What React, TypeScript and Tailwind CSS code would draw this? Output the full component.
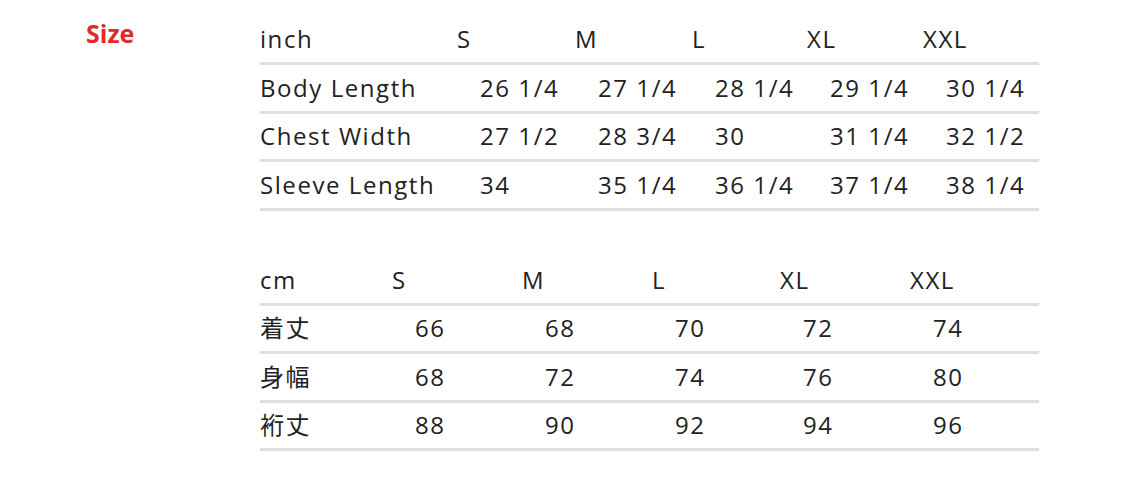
const inchHeads = ["S", "M", "L", "XL", "XXL"];
const inchRows = [
  ["Body Length", "26 1/4", "27 1/4", "28 1/4", "29 1/4", "30 1/4"],
  ["Chest Width", "27 1/2", "28 3/4", "30", "31 1/4", "32 1/2"],
  ["Sleeve Length", "34", "35 1/4", "36 1/4", "37 1/4", "38 1/4"],
];

const cmHeads = ["S", "M", "L", "XL", "XXL"];
const cmRows = [
  ["着丈", "66", "68", "70", "72", "74"],
  ["身幅", "68", "72", "74", "76", "80"],
  ["裄丈", "88", "90", "92", "94", "96"],
];

function SizeTable({
  unit,
  heads,
  rows,
  cols,
}: {
  unit: string;
  heads: string[];
  rows: string[][];
  cols: string;
}) {
  return (
    <div className="w-[779px]">
      <div className={`grid ${cols} h-[48px] items-end border-b-[3px] border-[#dfdfdf] pb-[7px]`}>
        <span>{unit}</span>
        {heads.map((h) => (
          <span key={h}>{h}</span>
        ))}
      </div>
      {rows.map((r) => (
        <div
          key={r[0]}
          className={`grid ${cols} h-[48.5px] items-end border-b-[3px] border-[#dfdfdf] pb-[7px]`}
        >
          {r.map((c, i) => (
            <span key={i} className={i === 0 ? "" : "pl-[23px]"}>
              {c}
            </span>
          ))}
        </div>
      ))}
    </div>
  );
}

export default function App() {
  return (
    <div
      className="w-[1125px] h-[490px] bg-white flex text-[#222] text-[24px] leading-[32px] tracking-[0.065em]"
      style={{ fontFamily: "'Open Sans', 'Noto Sans CJK JP', sans-serif" }}
    >
      <div className="w-[260px] pl-[86px] pt-[17px]">
        <span className="text-[25px] font-bold tracking-normal text-[#e02b2b]">Size</span>
      </div>
      <div className="flex flex-col pt-[17px] gap-[47px]">
        <SizeTable
          unit="inch"
          heads={inchHeads}
          rows={inchRows}
          cols="grid-cols-[197px_118px_117px_115px_116px_116px]"
        />
        <SizeTable
          unit="cm"
          heads={cmHeads}
          rows={cmRows}
          cols="grid-cols-[132px_130px_130px_128px_130px_129px]"
        />
      </div>
    </div>
  );
}
